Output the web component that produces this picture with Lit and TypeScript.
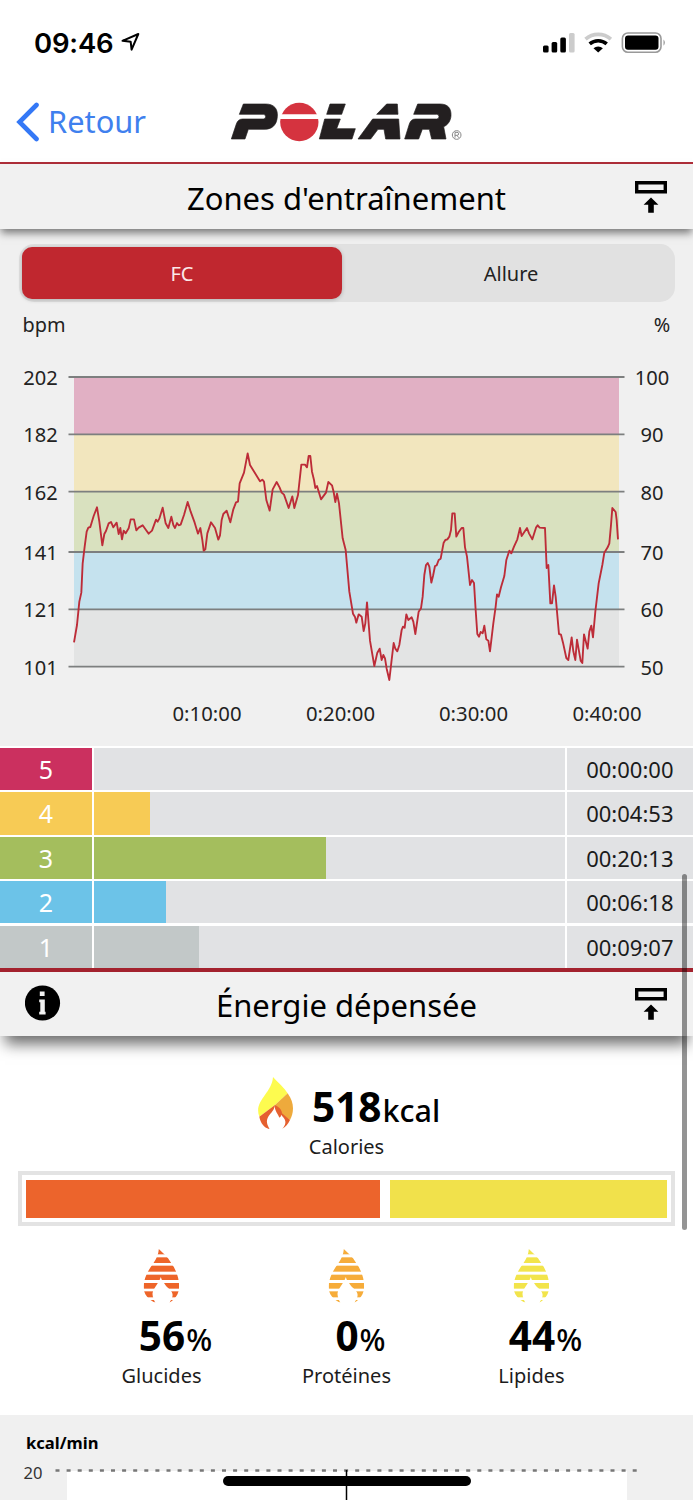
import { LitElement, html, svg, css } from "lit";
import { customElement, property } from "lit/decorators.js";

const HEART_RATE =
  "42,637 51,585 58,515 64,488 68,400 74,350 80,305 85,293 91,291 101,258 111,232 118,275 127,346 133,312 138,303 146,280 153,276 160,292 170,278 176,312 181,294 186,328 191,302 197,310 206,295 212,268 222,268 229,301 236,293 248,286 258,300 266,311 276,302 288,269 293,275 298,266 308,233 317,280 325,294 334,260 340,285 345,294 351,279 356,286 362,284 372,255 383,216 392,245 404,278 414,311 421,294 427,330 431,362 436,358 442,310 453,277 465,294 475,329 480,316 485,270 490,252 500,242 511,277 520,238 528,217 534,215 539,160 552,128 563,70 570,105 600,154 607,149 612,155 619,210 629,242 638,178 650,156 659,173 665,188 672,194 686,234 697,199 703,234 714,195 724,104 735,104 741,112 746,78 751,78 756,125 762,150 766,174 771,168 783,208 798,188 805,156 816,166 821,186 826,216 831,191 837,220 848,325 857,360 868,485 879,551 885,561 889,578 896,553 905,560 911,603 916,580 921,517 930,632 943,708 952,668 959,656 965,690 970,675 975,685 980,716 988,750 994,698 1001,639 1006,656 1012,664 1018,645 1025,600 1029,590 1034,593 1039,553 1045,570 1055,562 1060,575 1066,612 1076,545 1083,535 1088,500 1093,435 1098,405 1103,399 1108,410 1114,458 1119,438 1125,408 1130,406 1136,390 1142,386 1151,338 1156,330 1162,328 1168,320 1173,300 1177,250 1184,250 1189,320 1196,306 1205,294 1210,294 1215,352 1221,380 1230,465 1236,450 1242,459 1247,540 1252,612 1257,620 1262,606 1268,610 1273,587 1279,628 1285,632 1290,664 1300,580 1307,530 1311,493 1316,500 1323,472 1333,438 1339,390 1348,362 1354,370 1362,350 1372,328 1380,294 1385,318 1401,294 1407,310 1417,328 1428,293 1433,286 1439,293 1455,294 1460,414 1465,405 1471,520 1476,520 1482,466 1487,500 1497,612 1503,614 1509,638 1519,684 1525,690 1535,622 1540,664 1546,690 1551,629 1562,692 1567,699 1572,613 1583,656 1588,605 1594,587 1599,622 1606,545 1616,460 1627,405 1633,368 1643,352 1648,340 1653,285 1657,234 1667,246 1670,270 1674,328";

const GRID = [
  { y: 75, bpm: "202", pct: "100", fill: "#e1b0c4" },
  { y: 132.4, bpm: "182", pct: "90", fill: "#f2e6be" },
  { y: 189.7, bpm: "162", pct: "80", fill: "#d9e1bf" },
  { y: 250, bpm: "141", pct: "70", fill: "#c5e2ee" },
  { y: 307.3, bpm: "121", pct: "60", fill: "#e3e4e4" },
  { y: 364.6, bpm: "101", pct: "50", fill: "" },
];

const TIMES = [
  { x: 207, label: "0:10:00" },
  { x: 340.5, label: "0:20:00" },
  { x: 473.5, label: "0:30:00" },
  { x: 607, label: "0:40:00" },
];

const ZONES = [
  { n: 5, color: "#cb305f", width: 0, time: "00:00:00" },
  { n: 4, color: "#f7cb55", width: 56.5, time: "00:04:53" },
  { n: 3, color: "#a4be5d", width: 232.5, time: "00:20:13" },
  { n: 2, color: "#6cc3e8", width: 72.5, time: "00:06:18" },
  { n: 1, color: "#c2c8c8", width: 105, time: "00:09:07" },
];

const MACROS = [
  { color: "#ee6529", value: "56", label: "Glucides" },
  { color: "#f6ac3a", value: "0", label: "Protéines" },
  { color: "#f2e44b", value: "44", label: "Lipides" },
];

const STRIPES = [
  [0, 16], [25, 17], [50, 18], [77, 16], [102, 17], [127, 18], [153, 7],
];

@customElement("section-title")
class SectionTitle extends LitElement {
  @property() label = "";
  @property({ type: Boolean }) info = false;

  static styles = css`
    :host { display: block; position: relative; z-index: 1; }
    .bar {
      display: grid;
      grid-template-columns: 62px 1fr 62px;
      align-items: center;
      height: 100%;
      background: #f1f1f1;
    }
    .text {
      text-align: center;
      font-size: 31px;
      line-height: 40px;
      padding-top: 2px;
      white-space: nowrap;
    }
    .info { margin-left: 25px; margin-top: -1px; display: block; }
    .pin { margin-left: 4px; margin-top: -1px; display: block; }
  `;

  render() {
    return html`<div class="bar">
      <span>
        ${this.info
          ? html`<svg class="info" width="36" height="36" viewBox="0 0 36 36">
              <circle cx="17.5" cy="18" r="17.6" />
              <path fill="#f1f1f1" d="M14.800 6.500h4.800v4.600h-4.800zM14.200 14.600h5.600v12.200h.8v2.600h-6.400v-2.600h1.100v-9.600h-1.100z" />
            </svg>`
          : ""}
      </span>
      <span class="text">${this.label}</span>
      <svg class="pin" width="32" height="34" viewBox="0 0 32 34">
        <path fill="none" stroke="#000" stroke-width="3.4" d="M1.700 3.700h28.600v9h-28.600z" />
        <path d="M16 18.500l7.400 7.300h-4.600v8h-5.600v-8h-4.600z" />
      </svg>
    </div>`;
  }
}

@customElement("app-root")
class AppRoot extends LitElement {
  static styles = css`
    :host {
      display: block;
      position: relative;
      width: 693px;
      height: 1500px;
      overflow: hidden;
      background: #fff;
      color: #000;
      font-family: "Noto Sans", sans-serif;
    }
    .status {
      display: flex;
      align-items: center;
      height: 84px;
      padding: 0 26px 0 34px;
      box-sizing: border-box;
    }
    .clock {
      font: 600 27.500px/40px Inter, sans-serif;
      letter-spacing: -0.2px;
      margin-top: 2px;
    }
    .arrow { margin-left: 8px; margin-top: 0; }
    .signals { margin-left: auto; margin-top: 2px; }
    .nav {
      display: flex;
      align-items: center;
      height: 78px;
      padding-left: 16px;
      border-bottom: 2.500px solid #b02f3a;
    }
    .chevron { display: block; margin-top: -2px; }
    .back {
      width: 182px;
      margin-left: 9px;
      margin-top: -4px;
      font-size: 30.800px;
      line-height: 42px;
      color: #3f80ee;
    }
    .logo { display: block; margin-top: -2px; margin-left: 1px; }
    .head-one { height: 65px; box-shadow: 0 5px 8px -1px rgba(0, 0, 0, 0.5); }
    .head-two {
      height: 64px;
      border-top: 4px solid #a3222e;
      box-shadow: 0 13px 14px -5px rgba(0, 0, 0, 0.58);
    }
    .zones { background: #f0f0f0; padding-top: 15px; }
    .tabs {
      display: grid;
      grid-template-columns: 320px 1fr;
      height: 58px;
      margin: 0 18px 0 19px;
      padding: 3px;
      box-sizing: border-box;
      border-radius: 15px;
      background: #e1e1e1;
      font-size: 20px;
      line-height: 54px;
      text-align: center;
    }
    .tab { color: #222; padding-left: 8px; }
    .tab.on {
      height: 52px;
      padding-left: 0;
      border-radius: 10px;
      background: #c0272f;
      color: #fbe9e9;
      box-shadow: 0 1px 4px rgba(0, 0, 0, 0.22);
    }
    .chart { display: block; font-size: 20px; fill: #222; }
    .table {
      display: grid;
      grid-template-rows: repeat(5, 42.300px);
      row-gap: 2.100px;
      padding-top: 2px;
      background: #fff;
    }
    .row {
      display: grid;
      grid-template-columns: 92px 471.500px 1fr;
      grid-template-rows: 42.300px;
      column-gap: 1.800px;
      line-height: 43px;
    }
    .zone { text-align: center; font-size: 25px; color: #fff; }
    .track { background: #e1e2e4; }
    .fill { display: block; height: 100%; }
    .time {
      background: #e1e2e4;
      color: #1b1b1b;
      font-size: 22px;
      text-align: right;
      padding-right: 19.500px;
    }
    .energy { height: 378.800px; padding-top: 41px; box-sizing: border-box; }
    .total { display: flex; align-items: flex-start; height: 56px; padding-left: 257px; }
    .total .number { margin-left: 18px; margin-top: 5px; }
    .number {
      display: flex;
      align-items: baseline;
      font-size: 40.500px;
      line-height: 50px;
      font-weight: 700;
    }
    .unit { font-size: 30.500px; font-weight: 500; margin-left: 1px; }
    .caption { font-size: 20px; line-height: 28px; text-align: center; color: #1c1c1c; }
    .split {
      display: flex;
      gap: 10px;
      margin: 10px 18px 0;
      height: 55px;
      padding: 5px 4px 4px;
      box-sizing: border-box;
      border: 4px solid #e3e3e3;
    }
    .carbs { background: #ec642c; }
    .fats { background: #f1e14b; }
    .macros {
      display: grid;
      grid-template-columns: repeat(3, 185px);
      margin-left: 69px;
      padding-top: 23px;
    }
    .macro { display: flex; flex-direction: column; align-items: center; }
    .macro .number { margin-left: 28px; margin-top: 8px; }
    .macro .caption { margin-top: -2px; }
    .rate { display: block; background: #f0f0f0; }
    .scroll {
      position: absolute;
      z-index: 2;
      left: 682px;
      top: 874px;
      width: 5px;
      height: 356px;
      border-radius: 3px;
      background: rgba(0, 0, 0, 0.42);
    }
    .home {
      position: absolute;
      left: 223px;
      top: 1475.500px;
      width: 248px;
      height: 10px;
      border-radius: 5px;
      background: #000;
    }
  `;

  private label(x: number, y: number, width: number, text: string) {
    return svg`<text x=${x} y=${y} text-anchor="middle" textLength=${width} lengthAdjust="spacingAndGlyphs">${text}</text>`;
  }

  private chart() {
    return html`<svg class="chart" width="693" height="444" viewBox="0 0 693 444">
      ${this.label(44, 30, 43, "bpm")}
      ${this.label(662, 30, 16.5, "%")}
      ${GRID.slice(0, 5).map(
        (g, i) => svg`<rect x="74" y=${g.y} width="545" height=${GRID[i + 1].y - g.y} fill=${g.fill} />`
      )}
      ${GRID.map(
        (g) => svg`
          <path d="M68.500 ${g.y}H624.500" stroke="#7d7f7f" stroke-width="1.8" />
          ${this.label(40.5, g.y + 8, 34.5, g.bpm)}
          ${this.label(652, g.y + 8, g.pct.length * 11.5, g.pct)}`
      )}
      <polyline
        points=${HEART_RATE}
        transform="translate(60 128) scale(0.33333)"
        fill="none" stroke="#bd2c38" stroke-width="5.6" stroke-linejoin="round"
      />
      ${TIMES.map((t) => this.label(t.x, 419, 69, t.label))}
    </svg>`;
  }

  private stripedFlame(color: string) {
    return html`<svg width="37" height="54" viewBox="0 0 108 162">
      <defs>
        <clipPath id="drop">
          <path d="M46 0C58 12 72 22 83 42C98 62 107 88 107 112C107 136 94 152 77 162C84 150 90 142 86 132C84 124 70 116 64 106C60 98 54 94 52 84C44 106 28 120 27 134C27 144 32 154 36 162C14 152 0 136 0 112C2 84 14 64 30 42C40 28 45 14 46 0Z" />
        </clipPath>
      </defs>
      <g clip-path="url(#drop)" fill=${color}>
        ${STRIPES.map(([y, h]) => svg`<rect x="0" y=${y} width="108" height=${h} />`)}
      </g>
    </svg>`;
  }

  render() {
    return html`
      <div class="status">
        <span class="clock">09:46</span>
        <svg class="arrow" width="20" height="20" viewBox="0 0 20 20">
          <path d="M1.500 8.800L17.300 2L10.600 17.600L9.700 9.800Z" fill="none" stroke="#000" stroke-width="2" stroke-linejoin="round" />
        </svg>
        <svg class="signals" width="125" height="22" viewBox="0 0 125 22">
          <rect x="1" y="13.500" width="5.600" height="7" rx="1.500" />
          <rect x="9.600" y="10" width="5.600" height="10.500" rx="1.500" />
          <rect x="18.300" y="5.500" width="5.600" height="15" rx="1.500" />
          <rect x="27" y="1" width="5.600" height="19.500" rx="1.500" fill="#ccc" />
          <g fill="none">
            <path d="M43.500 7.200a19 19 0 0 1 25.400 0" stroke="#ccc" stroke-width="3.6" />
            <path d="M47.700 11.900a13 13 0 0 1 17 0" stroke="#000" stroke-width="3.600" />
          </g>
          <path d="M51.500 16.200a7.200 7.200 0 0 1 9.400 0L56.200 20.600Z" />
          <rect x="80.400" y="1" width="38.600" height="19.200" rx="5.500" fill="none" stroke="#999" stroke-width="1.600" />
          <rect x="83" y="3.500" width="33.500" height="14.200" rx="3" />
          <path d="M121.500 7.500q2.800 3.100 0 6.200z" fill="#999" />
        </svg>
      </div>
      <div class="nav">
        <svg class="chevron" width="23" height="40" viewBox="0 0 23 40">
          <path d="M20.500 3L3.500 20L20.500 37" fill="none" stroke="#3478f6" stroke-width="4.600" stroke-linecap="round" />
        </svg>
        <span class="back">Retour</span>
        <svg class="logo" width="232" height="40" viewBox="693 306 696 120" fill="#231f20" stroke="#231f20" stroke-width="2" stroke-linejoin="round">
          <path d="M730 312H797C822 312 834 326 832 350C830 376 816 388 792 388H745L735 417H694L709 372Q714 357 728 357H790Q797 357 797 350Q797 343 790 343H718Z" />
          <circle cx="898" cy="366" r="57.500" fill="#d5333f" stroke="none" />
          <path d="M836 343H962V357H836Z" fill="#fff" stroke="none" />
          <path d="M990 312H1036L1025 343H980ZM974 357H1021L1010 386H1066L1056 417H958Z" />
          <path d="M1160 312H1192L1194 343H1130ZM1118 357H1196L1200 417H1157L1152 388H1134L1112 417H1074Z" />
          <path d="M1253 312H1320C1344 312 1354 325 1353 347C1352 362 1344 375 1331 380L1338 417H1295L1288 388H1267L1256 417H1214L1228 372Q1233 357 1246 357H1310Q1317 357 1317 350Q1317 343 1310 343H1241Z" />
          <g fill="none" stroke="#888" stroke-width="3">
            <circle cx="1370" cy="405" r="13" />
            <path d="M1365 413V397H1371Q1376 397 1376 401.500Q1376 406 1371 406H1365M1371 406L1376 413" />
          </g>
        </svg>
      </div>
      <section-title class="head-one" label="Zones d'entraînement"></section-title>
      <div class="zones">
        <div class="tabs">
          <span class="tab on">FC</span>
          <span class="tab">Allure</span>
        </div>
        ${this.chart()}
      </div>
      <div class="table">
        ${ZONES.map(
          (z) => html`<div class="row">
            <span class="zone" style="background:${z.color}">${z.n}</span>
            <span class="track"><span class="fill" style="width:${z.width}px;background:${z.color}"></span></span>
            <span class="time">${z.time}</span>
          </div>`
        )}
      </div>
      <section-title class="head-two" label="Énergie dépensée" info></section-title>
      <div class="energy">
        <div class="total">
          <svg width="37" height="53" viewBox="171 79 111 159">
            <path fill="#fdfb4f" d="M219 79C238 100 254 112 263 128L225 163L178 198C160 150 215 130 219 79Z" />
            <path fill="#eeaa3c" d="M263 128C284 158 282 184 270 208L240 187L225 163Z" />
            <path fill="#e5602f" d="M178 198L225 163C240 170 246 180 246 188L270 208C264 222 256 229 245 235L207 235C192 230 182 218 178 198Z" />
            <path fill="#fff" d="M224 165C225 184 235 190 238 201C242 196 243 200 243 192C256 206 264 214 245 238L210 238C202 222 196 212 206 196C214 184 222 180 224 165Z" />
          </svg>
          <div class="number">518<span class="unit">kcal</span></div>
        </div>
        <div class="caption">Calories</div>
        <div class="split">
          <span class="carbs" style="width:353.500px"></span>
          <span class="fats" style="width:277.500px"></span>
        </div>
        <div class="macros">
          ${MACROS.map(
            (m) => html`<div class="macro">
              ${this.stripedFlame(m.color)}
              <div class="number">${m.value}<span class="unit">%</span></div>
              <div class="caption">${m.label}</div>
            </div>`
          )}
        </div>
      </div>
      <svg class="rate" width="693" height="86" viewBox="0 0 693 86">
        <rect x="67" y="56" width="560" height="30" fill="#fff" />
        <text x="26" y="34" font-size="16" font-weight="700" textLength="72.500" lengthAdjust="spacingAndGlyphs">kcal/min</text>
        <text x="23.500" y="64" font-size="16.500" fill="#333" textLength="19" lengthAdjust="spacingAndGlyphs">20</text>
        <path d="M55.500 55.500H637" stroke="#777" stroke-width="2.500" stroke-dasharray="4 7.100" />
        <path d="M346.500 55V86" stroke="#000" stroke-width="1.500" />
      </svg>
      <div class="scroll"></div>
      <div class="home"></div>
    `;
  }
}
